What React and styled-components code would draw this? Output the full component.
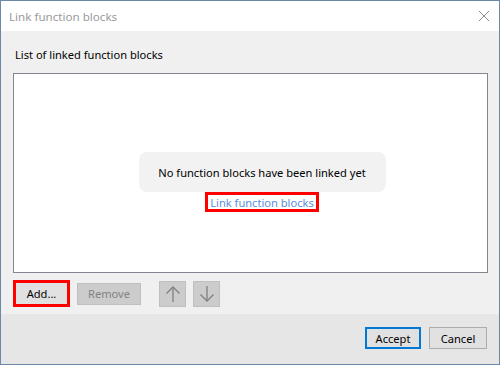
import styled, { createGlobalStyle } from "styled-components"

const Global = createGlobalStyle`
    html, body {
        margin: 0;
        padding: 0;
        background: #ffffff;
    }
    * {
        box-sizing: border-box;
    }
`

const Window = styled.div`
    width: 500px;
    height: 365px;
    border: 1px solid #6b89a6;
    display: flex;
    flex-direction: column;
    font-family: "Noto Sans", "Open Sans", sans-serif;
    font-size: 11.1px;
    color: #000;
    overflow: hidden;
`

const TitleBar = styled.div`
    height: 30px;
    flex: none;
    background: #fff;
    display: flex;
    align-items: center;
    justify-content: space-between;
    padding: 0 10px 0 8px;
    color: #9a9a9a;
    font-size: 11.6px;
`

const Close = styled.div`
    width: 10px;
    height: 10px;
    display: flex;
`

const Body = styled.div`
    flex: 1;
    background: #f0f0f0;
    padding: 16px 11px 0 12px;
    display: flex;
    flex-direction: column;
`

const Label = styled.div`
    line-height: 16px;
    margin-bottom: 10px;
    padding-left: 2px;
`

const ListBox = styled.div`
    height: 200px;
    background: #fff;
    border: 1px solid #828790;
    display: flex;
    flex-direction: column;
    align-items: center;
    padding: 78px 0 0 23px;
`

const Empty = styled.div`
    width: 247px;
    height: 40px;
    border-radius: 8px;
    background: #f2f2f2;
    display: flex;
    align-items: center;
    justify-content: center;
`

const LinkBox = styled.div`
    border: 3px solid #ff0000;
    height: 20px;
    padding: 0 2px;
    display: flex;
    align-items: center;
    color: #5a8edb;
`

const Row = styled.div`
    display: flex;
    align-items: center;
    margin-top: 7px;
    gap: 7px;
`

const Button = styled.div`
    height: 22px;
    width: ${p => p.w}px;
    display: flex;
    align-items: center;
    justify-content: center;
    background: ${p => (p.disabled ? "#cccccc" : "#e1e1e1")};
    border: 1px solid ${p => (p.disabled ? "#bfbfbf" : "#adadad")};
    color: ${p => (p.disabled ? "#838383" : "#000")};
`

const Highlight = styled.div`
    border: 3px solid #ff0000;
    display: flex;
`

const AddButton = styled(Button)`
    border: none;
    height: 21px;
`

const ArrowButton = styled.div`
    width: 27px;
    height: 26px;
    background: #cccccc;
    border: 1px solid #bfbfbf;
    display: flex;
    align-items: center;
    justify-content: center;
    margin-left: ${p => p.gap || 0}px;
`

const Footer = styled.div`
    height: 50px;
    flex: none;
    background: #e6e6e6;
    display: flex;
    justify-content: flex-end;
    align-items: flex-start;
    gap: 8px;
    padding: 13px 12px 0 0;
`

const DialogButton = styled(Button)`
    border: ${p => (p.primary ? "2px solid #0078d7" : "1px solid #adadad")};
`

function Arrow({ up }) {
    return (
        <svg width="16" height="18" viewBox="0 0 16 18" fill="none" stroke="#808080" strokeWidth="1.3">
            {up ? (
                <>
                    <path d="M8 2v15" />
                    <path d="M1.5 8.5L8 2l6.5 6.5" />
                </>
            ) : (
                <>
                    <path d="M8 1v15" />
                    <path d="M1.5 9.5L8 16l6.5-6.5" />
                </>
            )}
        </svg>
    )
}

export default function App() {
    return (
        <Window>
            <Global />
            <TitleBar>
                <span>Link function blocks</span>
                <Close>
                    <svg width="10" height="10" viewBox="0 0 10 10" stroke="#8a8a8a" strokeWidth="1">
                        <path d="M0 0L10 10M10 0L0 10" />
                    </svg>
                </Close>
            </TitleBar>
            <Body>
                <Label>List of linked function blocks</Label>
                <ListBox>
                    <Empty>No function blocks have been linked yet</Empty>
                    <LinkBox>Link function blocks</LinkBox>
                </ListBox>
                <Row>
                    <Highlight>
                        <AddButton w={51}>Add...</AddButton>
                    </Highlight>
                    <Button w={64} disabled>Remove</Button>
                    <ArrowButton gap={11}><Arrow up /></ArrowButton>
                    <ArrowButton><Arrow /></ArrowButton>
                </Row>
            </Body>
            <Footer>
                <DialogButton w={56} primary>Accept</DialogButton>
                <DialogButton w={58}>Cancel</DialogButton>
            </Footer>
        </Window>
    )
}
